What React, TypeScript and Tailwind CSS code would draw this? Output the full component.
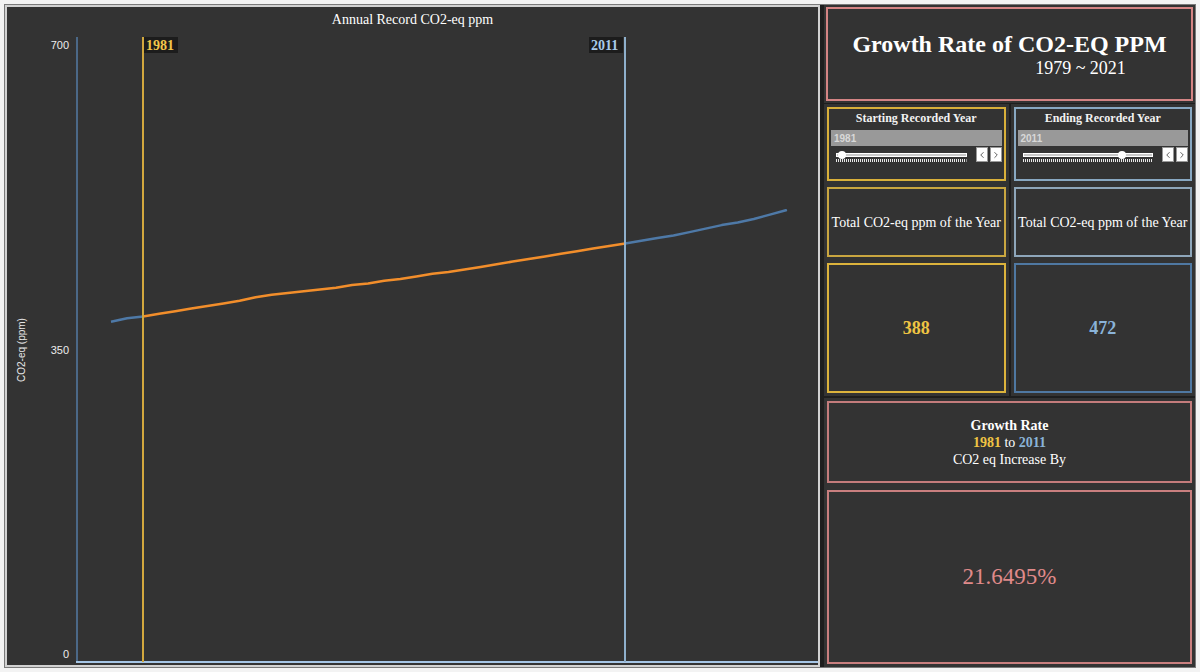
import { ChevronLeft, ChevronRight } from "lucide-react";

const START = 1979;
const values = [
  382, 386, 388, 391, 394, 397, 400, 403, 406, 410, 413, 415, 417, 419, 421,
  424, 426, 429, 431, 434, 437, 439, 442, 445, 448, 451, 454, 457, 460, 463,
  466, 469, 472, 475, 478, 481, 485, 489, 493, 496, 500, 505, 510,
];

const xOf = (year: number) => 111 + (year - START) * 16.07;
const yOf = (v: number) => 654 - v * 0.87;

const serif = { fontFamily: '"Liberation Serif", serif' };
const sans = { fontFamily: '"Liberation Sans", sans-serif' };

function pathFor(from: number, to: number) {
  const pts: string[] = [];
  for (let y = from; y <= to; y++) {
    pts.push(`${xOf(y).toFixed(1)},${yOf(values[y - START]).toFixed(1)}`);
  }
  return "M" + pts.join(" L");
}

function Chart() {
  return (
    <div className="flex h-full flex-col">
      <div className="flex h-[24px] items-end justify-center pb-[1px] font-['Liberation_Serif',serif] text-[14px] text-white">
        Annual Record CO2-eq ppm
      </div>
      <svg viewBox="7 31 811 634" width={811} height={634} className="block">
        <text
          x={25}
          y={350}
          transform="rotate(-90 25 350)"
          textAnchor="middle"
          style={sans}
          fontSize={10}
          fill="#e6e6e6"
        >
          CO2-eq (ppm)
        </text>
        {[700, 350, 0].map((t) => (
          <text key={t} x={69} y={yOf(t) + 4} textAnchor="end" style={sans} fontSize={11} fill="#ececec">
            {t}
          </text>
        ))}
        <line x1={77} y1={37} x2={77} y2={663} stroke="#4b6887" strokeWidth={2} />
        <line x1={76} y1={662} x2={818} y2={662} stroke="#a6c6e6" strokeWidth={2} />
        <path d={pathFor(1979, 1981)} fill="none" stroke="#4e79a7" strokeWidth={2.5} strokeLinejoin="round" />
        <path d={pathFor(1981, 2011)} fill="none" stroke="#f28e2b" strokeWidth={2.5} strokeLinejoin="round" />
        <path
          d={pathFor(2011, 2021)}
          fill="none"
          stroke="#4e79a7"
          strokeWidth={2.5}
          strokeLinejoin="round"
          strokeLinecap="round"
        />
        <line x1={143} y1={37} x2={143} y2={662} stroke="#d2a83e" strokeWidth={2} />
        <line x1={625} y1={37} x2={625} y2={662} stroke="#8fb0cc" strokeWidth={2} />
        <rect x={144} y={37} width={34} height={16} fill="#1c1c1c" />
        <text x={146} y={50} style={serif} fontWeight="bold" fontSize={14} fill="#f2c64a">
          1981
        </text>
        <rect x={589} y={37} width={34} height={16} fill="#1c1c1c" />
        <text x={591} y={50} style={serif} fontWeight="bold" fontSize={14} fill="#a9cbea">
          2011
        </text>
      </svg>
    </div>
  );
}

function YearControl({
  title,
  year,
  pos,
  border,
}: {
  title: string;
  year: string;
  pos: number;
  border: string;
}) {
  return (
    <div className={`flex h-[74px] flex-col border-2 px-[2px] ${border}`}>
      <div className="pt-[1px] text-center font-['Liberation_Serif',serif] text-[12px] font-bold leading-[16px] text-[#f2f2f2]">
        {title}
      </div>
      <div className="mt-[4px] flex h-[16px] items-center bg-[#999999] pl-[3px] font-['Liberation_Sans',sans-serif] text-[10px] font-bold text-[#d8d8d8]">
        {year}
      </div>
      <div className="mt-[1px] flex items-start gap-[3px]">
        <div className="flex flex-1 flex-col pl-[5px] pr-[6px] pt-[6px]">
          <div className="relative h-[4px] border border-white bg-[#c8c8c8]">
            <div
              className="absolute top-[-3px] h-[8px] w-[8px] -translate-x-1/2 rounded-full bg-white"
              style={{ left: `${pos}%` }}
            />
          </div>
          <svg height={3} className="mt-[2px] w-full">
            <line x1={0} y1={1.5} x2="100%" y2={1.5} stroke="#e8e8e8" strokeWidth={3} strokeDasharray="1 1" />
          </svg>
        </div>
        <div className="flex gap-[2px]">
          <div className="flex h-[15px] w-[12px] items-center justify-center border border-[#999] bg-white">
            <ChevronLeft size={10} strokeWidth={2} color="#444" />
          </div>
          <div className="flex h-[15px] w-[12px] items-center justify-center border border-[#999] bg-white">
            <ChevronRight size={10} strokeWidth={2} color="#444" />
          </div>
        </div>
      </div>
    </div>
  );
}

function YearColumn({
  title,
  year,
  value,
  pos,
  sliderBorder,
  labelBorder,
  valueBorder,
  valueColor,
}: {
  title: string;
  year: string;
  value: number;
  pos: number;
  sliderBorder: string;
  labelBorder: string;
  valueBorder: string;
  valueColor: string;
}) {
  return (
    <div className="flex flex-col gap-[6px] bg-[#333333] p-[3px]">
      <YearControl title={title} year={year} pos={pos} border={sliderBorder} />
      <div
        className={`flex h-[70px] items-center justify-center border-2 font-['Liberation_Serif',serif] text-[14px] whitespace-nowrap text-white ${labelBorder}`}
      >
        Total CO2-eq ppm of the Year
      </div>
      <div
        className={`flex h-[130px] items-center justify-center border-2 font-['Liberation_Serif',serif] text-[18px] font-bold ${valueBorder} ${valueColor}`}
      >
        {value}
      </div>
    </div>
  );
}

export default function App() {
  return (
    <div className="h-[672px] w-[1200px] bg-[#f3f3f3] p-[4px]">
      <div className="flex h-full w-full border border-[#7a7a7a]">
        <div className="h-full w-[815px] border-2 border-[#d2d2d2] bg-[#333333]">
          <Chart />
        </div>
        <div className="flex flex-1 flex-col gap-[1px] bg-[#1e1e1e] pl-[4px]">
          <div className="bg-[#333333] p-[2px]">
            <div className="flex h-[94px] flex-col items-center justify-center border-2 border-[#d48484] font-['Liberation_Serif',serif] text-white">
              <div className="text-[24px] font-bold leading-[28px]">Growth Rate of CO2-EQ PPM</div>
              <div className="pl-[142px] text-[18px] leading-[20px]">1979 ~ 2021</div>
            </div>
          </div>
          <div className="grid grid-cols-2 gap-[2px]">
            <YearColumn
              title="Starting Recorded Year"
              year="1981"
              value={388}
              pos={4}
              sliderBorder="border-[#d9b03a]"
              labelBorder="border-[#c9a640]"
              valueBorder="border-[#dcb33c]"
              valueColor="text-[#efc443]"
            />
            <YearColumn
              title="Ending Recorded Year"
              year="2011"
              value={472}
              pos={77}
              sliderBorder="border-[#88a8c2]"
              labelBorder="border-[#8ea6ba]"
              valueBorder="border-[#4f78a2]"
              valueColor="text-[#8ab3d8]"
            />
          </div>
          <div className="mt-[1px] flex flex-1 flex-col gap-[7px] bg-[#333333] p-[3px]">
            <div className="flex h-[82px] flex-col items-center justify-center border-2 border-[#c47c7c] font-['Liberation_Serif',serif] text-[14px] leading-[17px] text-white">
              <div className="font-bold">Growth Rate</div>
              <div>
                <span className="font-bold text-[#efc443]">1981</span> to{" "}
                <span className="font-bold text-[#8ab3d8]">2011</span>
              </div>
              <div>CO2 eq Increase By</div>
            </div>
            <div className="flex flex-1 items-center justify-center border-2 border-[#c97f7f] font-['Liberation_Serif',serif] text-[23px] text-[#e08a8a]">
              21.6495%
            </div>
          </div>
        </div>
      </div>
    </div>
  );
}
